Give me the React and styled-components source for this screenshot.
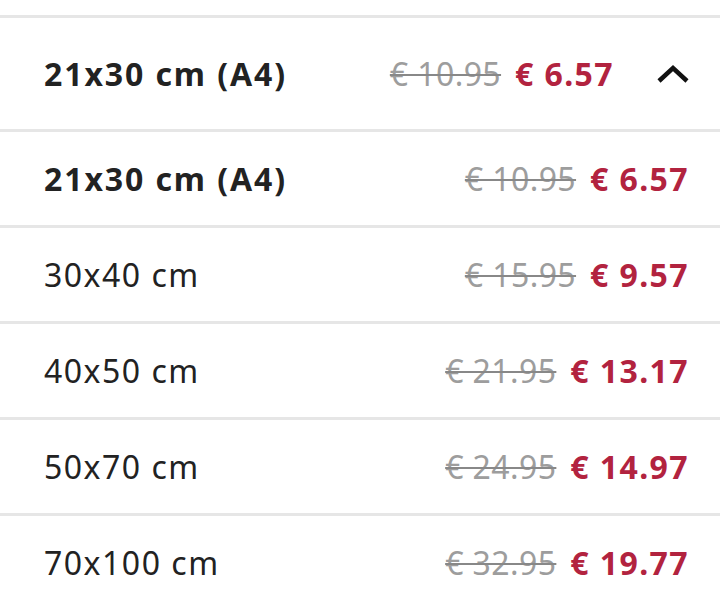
import React, { useState } from "react";
import styled, { createGlobalStyle } from "styled-components";

const GlobalStyle = createGlobalStyle`
  body {
    margin: 0;
    background: #fff;
    font-family: "Noto Sans", "Open Sans", sans-serif;
    color: #222;
  }
`;

const Wrapper = styled.div`
  padding-top: 15px;
  width: 720px;
`;

const Header = styled.button`
  display: flex;
  align-items: center;
  width: 100%;
  height: 117px;
  padding: 0 30px 0 44px;
  box-sizing: border-box;
  background: #fff;
  border: none;
  border-top: 3px solid #e6e6e6;
  border-bottom: 3px solid #e6e6e6;
  font-family: inherit;
  color: inherit;
  cursor: pointer;
`;

const Label = styled.span`
  flex: 1;
  text-align: left;
  font-size: 32px;
  font-weight: ${(p) => (p.$bold ? 700 : 400)};
  letter-spacing: ${(p) => (p.$bold ? "1.9px" : "1.5px")};
`;

const Prices = styled.span`
  display: flex;
  align-items: baseline;
  gap: 14px;
  font-size: 32px;
`;

const OldPrice = styled.s`
  color: #9d9d9d;
  letter-spacing: 0.4px;
  text-decoration-color: #888;
  text-decoration-thickness: 2px;
`;

const NewPrice = styled.span`
  color: #b2233f;
  font-weight: 700;
  letter-spacing: 1.4px;
`;

const Chevron = styled.svg`
  width: 34px;
  height: 20px;
  margin-left: 42px;
`;

const List = styled.ul`
  list-style: none;
  margin: 0;
  padding: 0;
`;

const Row = styled.li`
  display: flex;
  align-items: center;
  height: 96px;
  padding: 0 31px 0 44px;
  border-bottom: 3px solid #e6e6e6;
  box-sizing: border-box;
  cursor: pointer;
`;

const sizes = [
  { label: "21x30 cm (A4)", old: "€ 10.95", price: "€ 6.57" },
  { label: "30x40 cm", old: "€ 15.95", price: "€ 9.57" },
  { label: "40x50 cm", old: "€ 21.95", price: "€ 13.17" },
  { label: "50x70 cm", old: "€ 24.95", price: "€ 14.97" },
  { label: "70x100 cm", old: "€ 32.95", price: "€ 19.77" },
];

const App = () => {
  const [selected, setSelected] = useState(0);
  const [open, setOpen] = useState(true);
  const current = sizes[selected];

  return (
    <Wrapper>
      <GlobalStyle />
      <Header onClick={() => setOpen(!open)}>
        <Label $bold>{current.label}</Label>
        <Prices>
          <OldPrice>{current.old}</OldPrice>
          <NewPrice>{current.price}</NewPrice>
        </Prices>
        <Chevron viewBox="0 0 34 20">
          <path
            d={open ? "M3 17 L17 4 L31 17" : "M3 3 L17 16 L31 3"}
            fill="none"
            stroke="#111"
            strokeWidth="4.5"
          />
        </Chevron>
      </Header>
      {open && (
        <List>
          {sizes.map((s, i) => (
            <Row key={s.label} onClick={() => setSelected(i)}>
              <Label $bold={i === selected}>{s.label}</Label>
              <Prices>
                <OldPrice>{s.old}</OldPrice>
                <NewPrice>{s.price}</NewPrice>
              </Prices>
            </Row>
          ))}
        </List>
      )}
    </Wrapper>
  );
};

export default App;
